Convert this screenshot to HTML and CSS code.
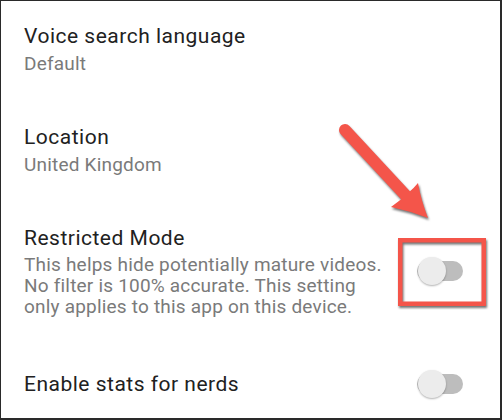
FILE: index.html
```
<!DOCTYPE html>
<html lang="en">
<head>
<meta charset="utf-8">
<title>Settings</title>
<link rel="stylesheet" href="styles.css">
</head>
<body>
<div class="screen">
  <div class="list">
    <div class="item">
      <div class="text">
        <div class="title">Voice search language</div>
        <div class="sub">Default</div>
      </div>
    </div>
    <div class="item">
      <div class="text">
        <div class="title">Location</div>
        <div class="sub">United Kingdom</div>
      </div>
    </div>
    <div class="item">
      <div class="text">
        <div class="title">Restricted Mode</div>
        <div class="desc">This helps hide potentially mature videos.<br>No filter is 100% accurate. This setting<br>only applies to this app on this device.</div>
      </div>
      <div class="switch"><div class="track"></div><div class="thumb"></div></div>
    </div>
    <div class="item last">
      <div class="text">
        <div class="title">Enable stats for nerds</div>
      </div>
      <div class="switch"><div class="track"></div><div class="thumb"></div></div>
    </div>
  </div>
  <svg class="annotation" width="502" height="420" viewBox="0 0 502 420" aria-hidden="true">
    <g class="shadowed">
      <line x1="345" y1="130" x2="409" y2="199" stroke="#f4554a" stroke-width="12" stroke-linecap="round"/>
      <path d="M418 183 Q421 200 428 218 Q410 211 391 207 Q401 200 408 193 Q414 188 418 183 Z" fill="#f4554a"/>
      <rect x="400.25" y="240.25" width="83.5" height="63.5" fill="none" stroke="#f4554a" stroke-width="4.5"/>
    </g>
  </svg>
</div>
</body>
</html>
```
FILE: styles.css
```
html, body {
  margin: 0;
  padding: 0;
  background: #ffffff;
}

.screen {
  position: relative;
  width: 502px;
  height: 420px;
  box-sizing: border-box;
  border-style: solid;
  border-color: #2a2a2a;
  border-width: 1px 2px 2px 1px;
  background: #ffffff;
  overflow: hidden;
  font-family: Roboto, "Noto Sans", "Liberation Sans", sans-serif;
}

.list {
  display: flex;
  flex-direction: column;
  gap: 50px;
  padding: 22px 37px 0 23px;
}

.item {
  display: flex;
  align-items: center;
  justify-content: space-between;
  gap: 20px;
}

.item.last {
  margin-top: 3px;
}

.text {
  flex: 1;
}

.title {
  font-size: 21px;
  line-height: 26px;
  letter-spacing: 0.5px;
  color: #212121;
}

.sub {
  margin-top: 4px;
  font-size: 19px;
  line-height: 21px;
  letter-spacing: 0.2px;
  color: #7a7a7a;
}

.desc {
  margin-top: 3px;
  font-size: 19px;
  line-height: 21px;
  letter-spacing: 0.2px;
  color: #7a7a7a;
}

.switch {
  position: relative;
  flex: none;
  width: 46px;
  height: 28px;
  display: flex;
  align-items: center;
}

.track {
  width: 46px;
  height: 20px;
  border-radius: 10px;
  background: #bdbdbd;
}

.thumb {
  position: absolute;
  left: 1px;
  top: 0;
  width: 28px;
  height: 28px;
  border-radius: 50%;
  background: #ececec;
  box-shadow: 0 1px 2px rgba(0, 0, 0, 0.3);
}

.annotation {
  position: absolute;
  top: -1px;
  left: -1px;
  pointer-events: none;
}

.shadowed {
  filter: drop-shadow(1px 2px 1px rgba(0, 0, 0, 0.55));
}
```
